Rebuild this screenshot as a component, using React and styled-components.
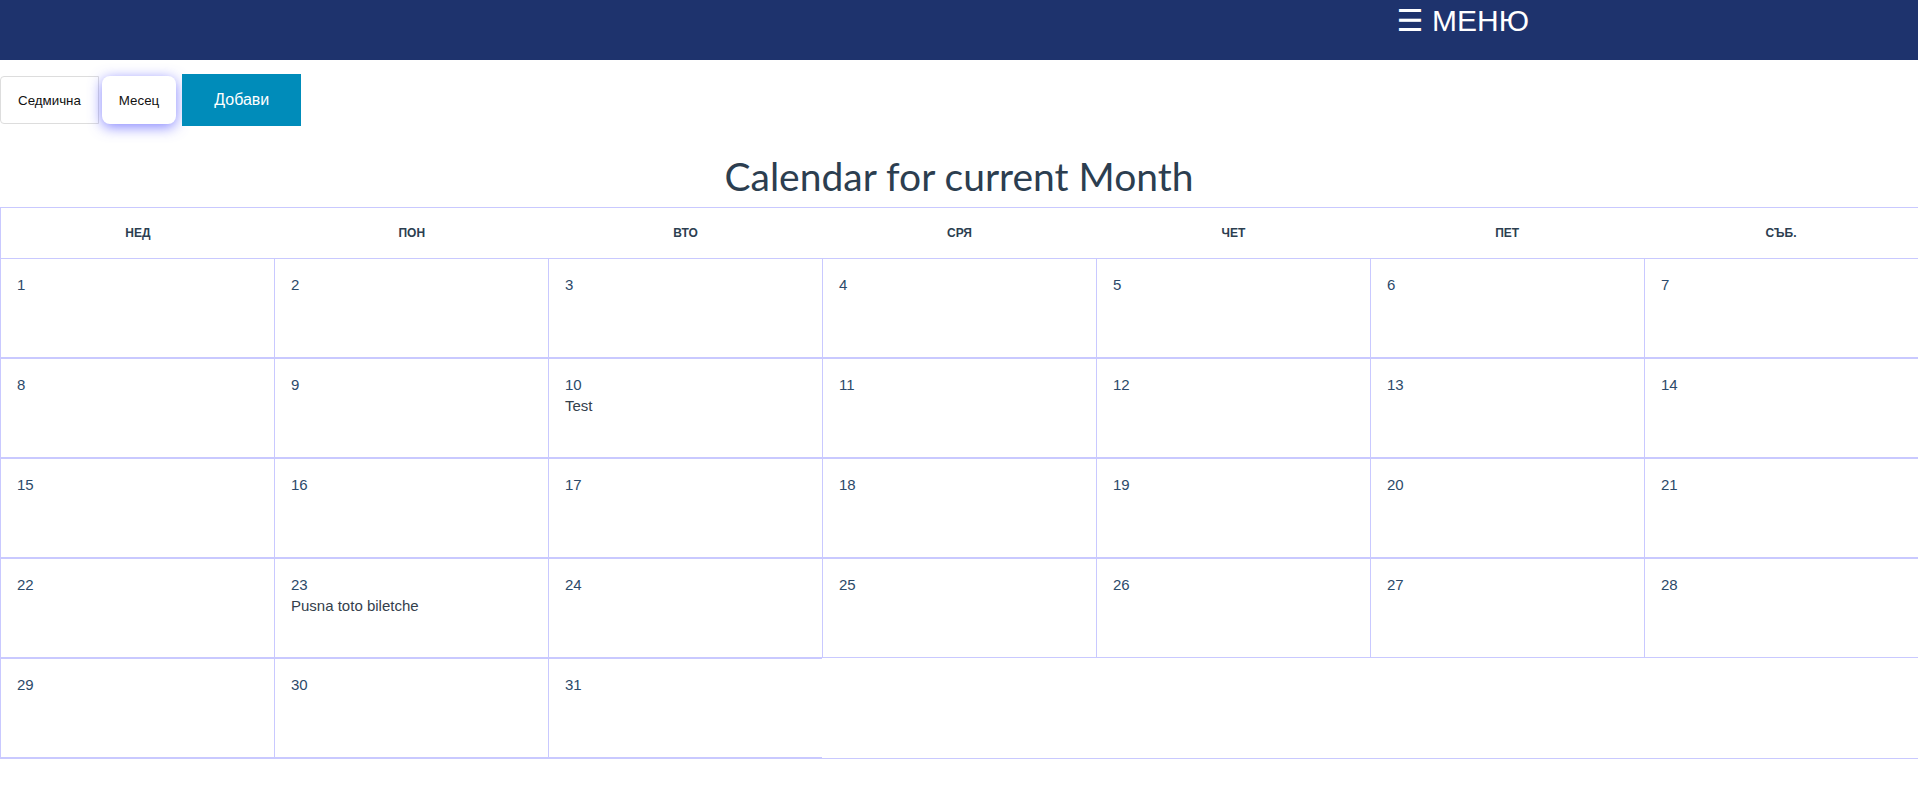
import styled, { createGlobalStyle } from "styled-components";

const GlobalStyle = createGlobalStyle`
  html, body {
    margin: 0;
    padding: 0;
    background: #ffffff;
  }
  body {
    font-family: 'Liberation Sans', Arial, Helvetica, sans-serif;
    color: #2c3e50;
  }
`

const weekDays = ['НЕД', 'ПОН', 'ВТО', 'СРЯ', 'ЧЕТ', 'ПЕТ', 'СЪБ.'];

const events = {
  10: ['Test'],
  23: ['Pusna toto biletche'],
};

const days = Array.from({ length: 31 }, (_, i) => i + 1);

const App = () => {
  return (
    <>
      <GlobalStyle />
      <NavBar>
        <MenuLink>☰ МЕНЮ</MenuLink>
      </NavBar>

      <Toolbar>
        <ViewButton>Седмична</ViewButton>
        <ViewButton $active>Месец</ViewButton>
        <AddButton>Добави</AddButton>
      </Toolbar>

      <Title>Calendar for current Month</Title>

      <Calendar>
        <WeekHeader>
          {weekDays.map((day) => (
            <DayName key={day}>{day}</DayName>
          ))}
        </WeekHeader>
        <DaysGrid>
          {days.map((day) => (
            <DayCell key={day}>
              <DayNumber>{day}</DayNumber>
              {(events[day] || []).map((ev) => (
                <EventText key={ev}>{ev}</EventText>
              ))}
            </DayCell>
          ))}
        </DaysGrid>
      </Calendar>
    </>
  )
}

const NavBar = styled.nav`
  display: flex;
  justify-content: flex-end;
  align-items: flex-start;
  height: 60px;
  background-color: #1e336d;
  box-sizing: border-box;
  padding-top: 3px;
  padding-right: 389px;
`

const MenuLink = styled.div`
  color: #ffffff;
  font-family: 'Liberation Sans', Arial, 'DejaVu Sans', sans-serif;
  font-size: 30px;
  white-space: nowrap;
  cursor: pointer;
`

const Toolbar = styled.div`
  display: flex;
  align-items: center;
  gap: 3px;
  margin-top: 14px;
  height: 52px;
`

const ViewButton = styled.button`
  height: 48px;
  padding: 0 17px;
  font-family: 'Liberation Sans', Arial, sans-serif;
  font-size: 13.333px;
  color: #111111;
  background-color: #ffffff;
  border: ${(p) => (p.$active ? 'none' : '1px solid #dddddd')};
  border-radius: ${(p) => (p.$active ? '8px' : '4px 0 0 4px')};
  box-shadow: ${(p) => (p.$active ? '0 3px 14px rgba(80, 80, 255, 0.7)' : 'none')};
  cursor: pointer;
`

const AddButton = styled.button`
  height: 52px;
  margin-left: 3px;
  padding: 0 32px;
  font-family: 'Liberation Sans', Arial, sans-serif;
  font-size: 16px;
  color: #ffffff;
  background-color: #008cba;
  border: none;
  cursor: pointer;
`

const Title = styled.h1`
  margin: 26px 0 7px;
  font-family: Lato, 'Liberation Sans', sans-serif;
  font-size: 39px;
  font-weight: 400;
  line-height: 48px;
  text-align: center;
  color: #2c3e50;
`

const Calendar = styled.div`
  border-top: 1px solid #c9c9ff;
  border-bottom: 1px solid #c9c9ff;
`

const WeekHeader = styled.div`
  display: grid;
  grid-template-columns: repeat(7, 1fr);
  height: 50px;
  border-left: 1px solid #c9c9ff;
`

const DayName = styled.div`
  display: flex;
  align-items: center;
  justify-content: center;
  font-size: 12px;
  font-weight: 700;
  text-transform: uppercase;
  color: #2c3e50;
`

const DaysGrid = styled.div`
  display: grid;
  grid-template-columns: repeat(7, 1fr);
`

const DayCell = styled.div`
  height: 100px;
  box-sizing: border-box;
  padding: 15px 16px 16px;
  border-left: 1px solid #c9c9ff;
  border-top: 1px solid #c9c9ff;
  border-bottom: 1px solid #c9c9ff;
  font-size: 15px;
  line-height: 21px;
`

const DayNumber = styled.div`
  color: #2c4a6a;
`

const EventText = styled.div`
  color: #34404c;
`

export default App;
